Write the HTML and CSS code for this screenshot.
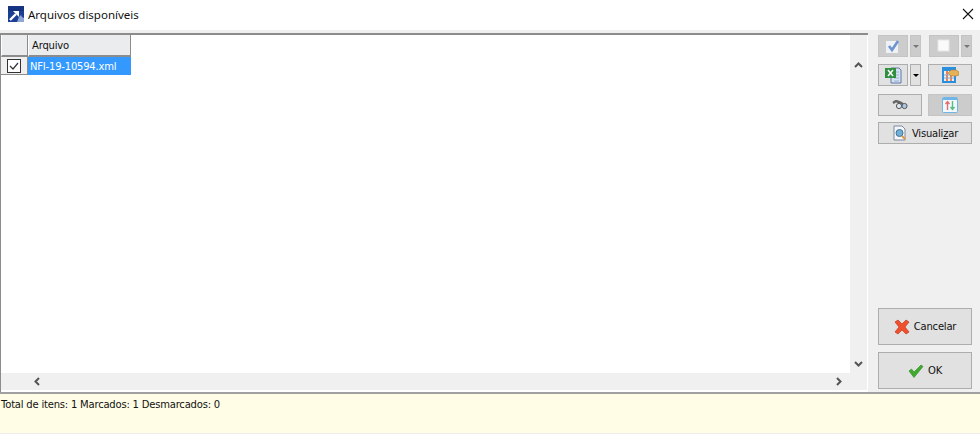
FILE: index.html
```html
<!DOCTYPE html>
<html lang="pt-BR">
<head>
  <meta charset="UTF-8" />
  <title>Arquivos disponíveis</title>
  <link rel="stylesheet" href="styles.css">
</head>
<body>
  <div class="window">
    <div class="titlebar">
      <svg class="app-icon" width="16" height="16" viewBox="0 0 16 16">
        <rect width="16" height="16" fill="#1c3f94"/>
        <path d="M0 0h16v5H0z" fill="#16337f"/>
        <path d="M9 16l2-5 2-2 1 2 2 1v4z" fill="#8fa6d6"/>
        <path d="M2 14l6-6" stroke="#fff" stroke-width="2.4" fill="none"/>
        <path d="M5 5h6v6z" fill="#fff"/>
      </svg>
      <span class="title-text">Arquivos disponíveis</span>
      <svg class="close-icon" width="12" height="12" viewBox="0 0 12 12">
        <path d="M1 1l10 10M11 1L1 11" stroke="#111" stroke-width="1.1" fill="none"/>
      </svg>
    </div>

    <div class="main">
      <div class="grid-wrap">
        <div class="grid-row-top">
          <div class="grid">
            <div class="grid-head">
              <div class="cell-check head-cell"></div>
              <div class="cell-name head-cell">Arquivo</div>
            </div>
            <div class="grid-line">
              <div class="cell-check check-cell">
                <svg width="14" height="14" viewBox="0 0 14 14">
                  <rect x="0.5" y="0.5" width="13" height="13" fill="#fff" stroke="#333"/>
                  <path d="M3 7l3 3 5-6" stroke="#333" stroke-width="1.2" fill="none"/>
                </svg>
              </div>
              <div class="cell-name selected-cell">NFI-19-10594.xml</div>
            </div>
          </div>
          <div class="vscroll">
            <svg width="9" height="6" viewBox="0 0 9 6"><path d="M1 5l3.500-3.500L8 5" stroke="#555" stroke-width="2" fill="none"/></svg>
            <svg width="9" height="6" viewBox="0 0 9 6"><path d="M1 1l3.500 3.500L8 1" stroke="#555" stroke-width="2" fill="none"/></svg>
          </div>
        </div>
        <div class="hscroll">
          <svg width="6" height="9" viewBox="0 0 6 9"><path d="M5 1L1.500 4.500 5 8" stroke="#555" stroke-width="2" fill="none"/></svg>
          <svg width="6" height="9" viewBox="0 0 6 9"><path d="M1 1l3.500 3.500L1 8" stroke="#555" stroke-width="2" fill="none"/></svg>
        </div>
      </div>

      <div class="side">
        <div class="side-row">
          <div class="split">
            <button class="btn btn-icon pressed">
              <svg width="16" height="16" viewBox="0 0 16 16">
                <rect x="1" y="3" width="12" height="12" fill="#eef1f6"/>
                <path d="M4 8l3 4 6-9" stroke="#6f94d2" stroke-width="2.600" fill="none"/>
              </svg>
            </button>
            <button class="btn btn-arrow pressed"><span class="caret caret-grey"></span></button>
          </div>
          <div class="split">
            <button class="btn btn-icon pressed">
              <svg width="16" height="16" viewBox="0 0 16 16">
                <rect x="2" y="2" width="11" height="11" fill="#fafafa" stroke="#e6e6e6"/>
              </svg>
            </button>
            <button class="btn btn-arrow pressed"><span class="caret caret-grey"></span></button>
          </div>
        </div>

        <div class="side-row">
          <div class="split">
            <button class="btn btn-icon">
              <svg width="18" height="18" viewBox="0 0 18 18">
                <path d="M7 2h8l2 2v13H7z" fill="#d6e2f2" stroke="#5d7ba6"/>
                <path d="M10 6h5M10 9h5M10 12h5M10 15h5" stroke="#9ab2d2"/>
                <rect x="1" y="2" width="11" height="10" fill="#2f8f3e"/>
                <path d="M4 4l5 6M9 4l-5 6" stroke="#fff" stroke-width="1.500"/>
              </svg>
            </button>
            <button class="btn btn-arrow"><span class="caret"></span></button>
          </div>
          <button class="btn btn-wide">
            <svg width="18" height="18" viewBox="0 0 18 18">
              <rect x="1" y="1" width="14" height="16" fill="#2b8fe0"/>
              <rect x="3" y="5" width="10" height="10" fill="#f6efe4"/>
              <path d="M6 5v10M10 5v10" stroke="#e2603a" stroke-width="1.500"/>
              <path d="M3 9h10M3 12h10" stroke="#7fa9d8"/>
              <path d="M7 7l3-3h5l3 2v3l-3 1h-5z" fill="#e5b25a" stroke="#a87a2c" stroke-width="0.600"/>
            </svg>
          </button>
        </div>

        <div class="side-row side-row-3">
          <button class="btn btn-wide">
            <svg width="16" height="10" viewBox="0 0 16 10">
              <path d="M1 3l3-2 4 1.500 3 1.500" stroke="#666" stroke-width="2.500" fill="none"/>
              <circle cx="7" cy="6" r="2.600" fill="#dfe7f0" stroke="#555"/>
              <circle cx="12.500" cy="6" r="2.600" fill="#a9c6e6" stroke="#555"/>
            </svg>
          </button>
          <button class="btn btn-wide pressed">
            <svg width="16" height="16" viewBox="0 0 16 16">
              <rect x="0.500" y="0.500" width="15" height="15" rx="1" fill="#f2f8fd" stroke="#6fb6e6"/>
              <path d="M1 2h14" stroke="#6fb6e6" stroke-width="2"/>
              <path d="M5.500 13V5M3.500 7l2-2.500 2 2.500" stroke="#e2706a" stroke-width="1.400" fill="none"/>
              <path d="M10.500 4v8M8.500 10l2 2.500 2-2.500" stroke="#5cbc80" stroke-width="1.400" fill="none"/>
            </svg>
          </button>
        </div>

        <button class="btn btn-full">
          <svg width="16" height="16" viewBox="0 0 16 16">
            <path d="M2 1h8l3 3v11H2z" fill="#f4f6fa" stroke="#7d8aa0"/>
            <circle cx="7.500" cy="8" r="3.500" fill="#6fb0d8" stroke="#47708f"/>
            <path d="M10 11l3 3" stroke="#e39a3c" stroke-width="2"/>
          </svg>
          <span>Visuali<u>z</u>ar</span>
        </button>

        <div class="side-spacer"></div>

        <button class="btn btn-big">
          <svg width="16" height="16" viewBox="0 0 16 16">
            <path d="M1 3l3-2 4 4 4-4 3 2-4 5 4 5-3 2-4-4-4 4-3-2 4-5z" fill="#f0512c" stroke="#c23a1d" stroke-width="0.700"/>
          </svg>
          <span>Cancelar</span>
        </button>
        <button class="btn btn-big btn-ok">
          <svg width="16" height="14" viewBox="0 0 16 14">
            <path d="M1 7l2.500-2 2.500 3 7-7 2 1.500-9 11z" fill="#3faa2e" stroke="#2c8a20" stroke-width="0.600"/>
          </svg>
          <span>OK</span>
        </button>
      </div>
    </div>

    <div class="status">Total de itens: 1 Marcados: 1 Desmarcados: 0</div>
  </div>
</body>
</html>
```

FILE: styles.css
```css
html, body {
  margin: 0;
  padding: 0;
  background: #fff;
}

.window {
  width: 980px;
  height: 435px;
  display: flex;
  flex-direction: column;
  overflow: hidden;
  font-family: 'DejaVu Sans', sans-serif;
  font-size: 10px;
  letter-spacing: -0.2px;
  color: #111;
}

.titlebar {
  height: 30px;
  box-sizing: border-box;
  display: flex;
  align-items: center;
  padding: 0 6px 2px 8px;
  background: #fff;
  flex-shrink: 0;
}

.app-icon {
  margin-right: 4px;
}

.title-text {
  flex: 1;
  font-family: 'Noto Sans', sans-serif;
  font-size: 11.5px;
  letter-spacing: 0;
}

.main {
  height: 364px;
  flex-shrink: 0;
  display: flex;
  background: #f0f0f0;
  border-bottom: 2px solid #a0a0a0;
  box-sizing: border-box;
  padding-top: 3px;
}

.grid-wrap {
  width: 868px;
  height: 359px;
  display: flex;
  flex-direction: column;
  background: #fff;
  box-sizing: border-box;
  border-top: 2px solid #8c8c8c;
  border-left: 1px solid #8c8c8c;
  padding-bottom: 2px;
  padding-right: 1px;
}

.grid-row-top {
  flex: 1;
  display: flex;
  min-height: 0;
}

.grid {
  flex: 1;
  background: #fff;
}

.grid-head, .grid-line {
  display: flex;
}

.cell-check {
  width: 27px;
  box-sizing: border-box;
  flex-shrink: 0;
}

.cell-name {
  width: 103px;
  box-sizing: border-box;
  padding-left: 3px;
}

.head-cell {
  height: 22px;
  line-height: 21px;
  background: #eaecee;
  border-left: 1px solid #fff;
  border-right: 1px solid #8c8c8c;
  border-bottom: 2px solid #8c8c8c;
  padding-left: 3px;
}

.grid-line {
  height: 18px;
}

.check-cell {
  display: flex;
  align-items: center;
  justify-content: center;
  background: #f0f0f0;
  border-bottom: 1px solid #8c8c8c;
  border-right: 1px solid #8c8c8c;
}

.selected-cell {
  background: #3399ff;
  color: #fff;
  line-height: 19px;
  padding-left: 2px;
}

.vscroll {
  width: 17px;
  background: #f0f0f0;
  display: flex;
  flex-direction: column;
  justify-content: space-between;
  align-items: center;
  padding: 27px 0 6px;
  box-sizing: border-box;
}

.hscroll {
  height: 17px;
  background: #f0f0f0;
  flex-shrink: 0;
  display: flex;
  justify-content: space-between;
  align-items: center;
  padding: 0 25px 0 33px;
}

.side {
  flex: 1;
  display: flex;
  flex-direction: column;
  padding: 2px 8px 0 10px;
}

.side-row {
  display: flex;
  justify-content: space-between;
  margin-bottom: 7px;
}

.side-row-3 {
  margin-bottom: 6px;
  margin-top: 1px;
}

.split {
  display: flex;
  gap: 2px;
}

.btn {
  margin: 0;
  padding: 0;
  box-sizing: border-box;
  height: 22px;
  border: 1px solid #adadad;
  background: #e1e1e1;
  display: flex;
  align-items: center;
  justify-content: center;
  font-family: 'DejaVu Sans', sans-serif;
  font-size: 10px;
  letter-spacing: -0.2px;
  color: #111;
}

.pressed {
  background: #cccccc;
  border-color: #c4c4c4;
}

.btn-icon {
  width: 30px;
}

.btn-arrow {
  width: 11px;
}

.btn-wide {
  width: 44px;
}

.btn-full {
  width: 94px;
  gap: 4px;
}

.side-spacer {
  flex: 1;
}

.btn-big {
  width: 94px;
  height: 37px;
  gap: 4px;
}

.btn-ok {
  margin-top: 7px;
  margin-bottom: 3px;
}

.caret {
  width: 0;
  height: 0;
  border-left: 3.5px solid transparent;
  border-right: 3.5px solid transparent;
  border-top: 3.5px solid #000;
}

.caret-grey {
  border-top-color: #777;
}

.status {
  flex: 1;
  background: #fffde6;
  border-bottom: 1px solid #eeeeee;
  padding: 4px 1px;
  margin-bottom: 1px;
  line-height: 14px;
}
```
